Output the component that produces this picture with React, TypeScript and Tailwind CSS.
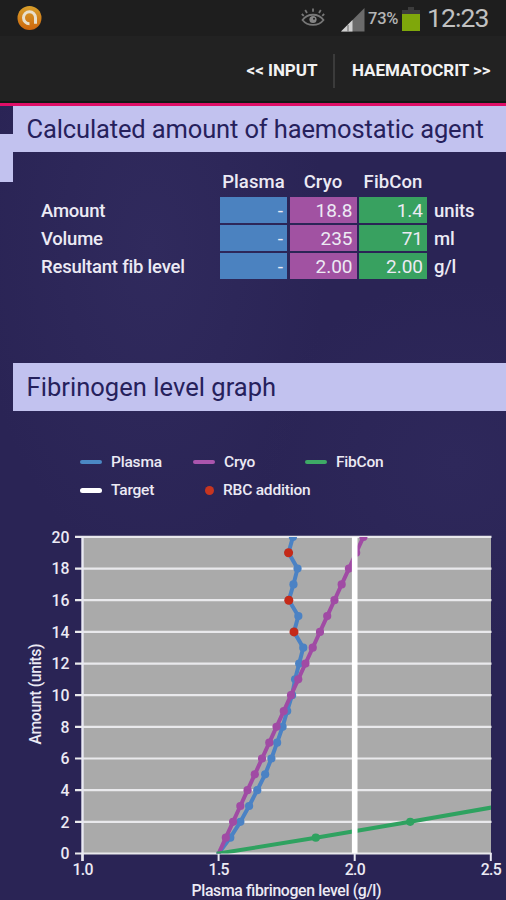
import clsx from 'clsx';

type Column = { label: string; color: string; values: string[] };

const ROWS = [
  { label: 'Amount', unit: 'units' },
  { label: 'Volume', unit: 'ml' },
  { label: 'Resultant fib level', unit: 'g/l' },
];

const COLUMNS: Column[] = [
  { label: 'Plasma', color: 'bg-[#4b82c0]', values: ['-', '-', '-'] },
  { label: 'Cryo', color: 'bg-[#a152a2]', values: ['18.8', '235', '2.00'] },
  { label: 'FibCon', color: 'bg-[#38a160]', values: ['1.4', '71', '2.00'] },
];

// Fibrinogen level for each whole unit, starting at 0
const PLASMA = [
  1.5, 1.543, 1.58, 1.612, 1.642, 1.671, 1.694, 1.715, 1.735, 1.752, 1.77, 1.781, 1.796, 1.811, 1.777, 1.793,
  1.758, 1.775, 1.79, 1.757, 1.773,
];
const CRYO = Array.from({ length: 21 }, (_, i) => 1.5 + i * 0.0266);
const FIBCON = [1.5, 1.857, 2.204, 2.535];
const RBC = [14, 16, 19];

const px = (level: number) => 82.5 + (level - 1) * 272.2;
const py = (amount: number) => 333.5 - amount * 15.83;

function SectionTitle({ children, className }: { children: string; className?: string }) {
  return (
    <h2 className={clsx('ml-[12.5px] bg-[#c2c2ef] pl-[14px] text-[25.5px] text-[#26215c] whitespace-nowrap', className)}>
      {children}
    </h2>
  );
}

function StatusBar() {
  return (
    <div className="flex h-9 items-center bg-[#1e1e1e] pl-[17px] pr-[17px]">
      <svg width="25" height="26" viewBox="0 0 25 26">
        <defs>
          <linearGradient id="orb" x1="0" y1="0" x2="0" y2="1">
            <stop offset="0" stopColor="#d9a02b" />
            <stop offset="1" stopColor="#cd650c" />
          </linearGradient>
        </defs>
        <circle cx="12.5" cy="13" r="12" fill="url(#orb)" />
        <path d="M12.500 18.800A6 6 0 1 1 18.500 12.800V18.800" fill="none" stroke="#e8dfcc" strokeWidth="3" />
      </svg>
      <svg className="ml-auto" width="24" height="20" viewBox="0 0 24 20" fill="none" stroke="#777" strokeWidth="1.8">
        <path d="M1.5 12c5-7 16-7 21 0c-5 6.500-16 6.500-21 0Z" />
        <path d="M6 5 4.200 2M12 3.800V.5M18 5l1.800-3M2.800 7.800.8 6M21.200 7.800 23.200 6" />
        <circle cx="12" cy="11.500" r="3.600" fill="#858585" stroke="none" />
        <circle cx="13" cy="10.800" r="1" fill="#222" stroke="none" />
      </svg>
      <svg className="ml-4 mt-[3px]" width="24" height="24" viewBox="0 0 24 24">
        <path d="M0 23.500 23.500 0V23.500Z" fill="#6b6b6b" />
        <path d="M0 23.500 11.500 12V23.500Z" fill="#d0d0d0" />
        <path d="M7 17V23.500" stroke="#666" strokeWidth="1" />
      </svg>
      <span className="ml-[3px] mt-[2px] w-[31px] whitespace-nowrap text-[16.5px] tracking-[-0.2px] font-medium text-[#b5b5b5]">73%</span>
      <svg className="ml-[3px] mt-[1px]" width="18" height="24" viewBox="0 0 18 24">
        <path d="M0 3H6V0H12V3H18V7H0Z" fill="#3c3c3c" />
        <path d="M0 7H18V24H0Z" fill="#7fa70b" />
      </svg>
      <span className="ml-[7px] w-[62px] whitespace-nowrap text-[26.5px] tracking-[-0.9px] text-[#c1c1c1]">12:23</span>
    </div>
  );
}

function ActionBar() {
  return (
    <div className="flex h-[67px] items-center justify-end border-b-[2px] border-[#111a14] bg-[#222] pr-[15px] pt-[4px] text-[17px] font-bold text-[#f3f3f3]">
      <button className="w-[72px] tracking-[-0.05px] whitespace-nowrap">&lt;&lt; INPUT</button>
      <div className="ml-[15px] h-[34px] w-[2px] bg-[#3b3b3b]" />
      <button className="ml-[17px] w-[139px] text-left tracking-[-0.05px] whitespace-nowrap">HAEMATOCRIT &gt;&gt;</button>
    </div>
  );
}

function ResultTable() {
  return (
    <div className="mt-[16px] ml-[41px] grid grid-cols-[176.500px_67px_67px_68px_60px] grid-rows-[27px_26px_26px_26px] gap-x-[2.500px] gap-y-[2px] text-[18.5px] font-medium text-[#eceaf4]">
      <span />
      {COLUMNS.map((col) => (
        <span key={col.label} className="text-center leading-[29px] tracking-[0.1px] whitespace-nowrap">{col.label}</span>
      ))}
      <span />
      {ROWS.map((row, i) => (
        <div key={row.label} className="contents">
          <span className="leading-[28px] tracking-[-0.21px] whitespace-nowrap">{row.label}</span>
          {COLUMNS.map((col) => (
            <span key={col.label} className={clsx('pr-[4px] text-right text-[19px] leading-[27px] font-normal', col.color)}>{col.values[i]}</span>
          ))}
          <span className="pl-[4.500px] leading-[28px] tracking-[-0.1px]">{row.unit}</span>
        </div>
      ))}
    </div>
  );
}

function Legend() {
  return (
    <div className="mt-[39px] ml-[80px] grid grid-cols-[113px_112px_120px] gap-y-[4px] text-[15.500px] leading-6 font-medium tracking-[-0.2px] whitespace-nowrap text-[#eceaf4]">
      <div className="flex items-center gap-[9px]">
        <i className="h-1 w-[22px] shrink-0 rounded-full bg-[#4b88c4]" />Plasma
      </div>
      <div className="flex items-center gap-[9px]">
        <i className="h-1 w-[22px] shrink-0 rounded-full bg-[#aa55ad]" />Cryo
      </div>
      <div className="flex items-center gap-[9px]">
        <i className="h-1 w-[22px] shrink-0 rounded-full bg-[#3eaa66]" />FibCon
      </div>
      <div className="flex items-center gap-[9px]">
        <i className="h-[5px] w-[22px] shrink-0 rounded-full bg-white" />Target
      </div>
      <div className="flex items-center gap-[9px] pl-[12px]">
        <i className="h-[9px] w-[9px] shrink-0 rounded-full bg-[#c73520]" />RBC addition
      </div>
    </div>
  );
}

function Series({ data, color }: { data: number[]; color: string }) {
  return (
    <g fill={color}>
      <polyline
        points={data.map((level, i) => `${px(level)},${py(i)}`).join(' ')}
        fill="none"
        stroke={color}
        strokeWidth="4"
        strokeLinejoin="round"
        strokeLinecap="square"
      />
      {data.slice(1).map((level, i) => (
        <circle key={i} cx={px(level)} cy={py(i + 1)} r="4.100" />
      ))}
    </g>
  );
}

function Chart() {
  const amounts = Array.from({ length: 11 }, (_, i) => i * 2);
  return (
    <svg className="block" width="506" height="380" viewBox="0 0 506 380" fontSize="15.800" fontWeight="500" fill="#eceaf4">
      <defs>
        <clipPath id="plot">
          <rect x="75" y="17" width="416" height="316.500" />
        </clipPath>
      </defs>
      <rect x="82" y="17" width="409" height="316" fill="#aaa" />
      {amounts.map((n) => (
        <g key={n}>
          <path d={`M75 ${py(n)}H491.500`} stroke="#e9e9ec" strokeWidth="2.200" />
          <text x="69.500" y={py(n) + 5.700} textAnchor="end">{n}</text>
        </g>
      ))}
      <path d="M82.500 16V341" stroke="#e9e9f2" strokeWidth="2.400" />
      {[1, 1.5, 2, 2.5].map((n) => (
        <g key={n}>
          <path d={`M${px(n)} 333V341`} stroke="#e9e9f2" strokeWidth="2" />
          <text x={px(n) + 0.5} y="355" textAnchor="middle" textLength="21">{n.toFixed(1)}</text>
        </g>
      ))}
      <g clipPath="url(#plot)">
        <Series data={PLASMA} color="#4b82c4" />
        <Series data={CRYO} color="#a04ba4" />
        <Series data={FIBCON} color="#2fa260" />
        {RBC.map((n) => (
          <circle key={n} cx={px(PLASMA[n])} cy={py(n)} r="4.500" fill="#c52a18" />
        ))}
        <path d={`M${px(2)} 17V333.500`} stroke="#fff" strokeWidth="5.600" />
      </g>
      <text x="286.500" y="375.500" textAnchor="middle" textLength="190">Plasma fibrinogen level (g/l)</text>
      <text transform="translate(40.500 174) rotate(-90)" textAnchor="middle" textLength="101">Amount (units)</text>
    </svg>
  );
}

export default function App() {
  return (
    <div className="flex h-[900px] w-[506px] flex-col overflow-hidden bg-[#2a2455] font-['Roboto',sans-serif]">
      <StatusBar />
      <ActionBar />
      <div className="h-[3px] shrink-0 bg-[#df0f68]" />
      <main className="relative h-[794px] bg-[radial-gradient(ellipse_at_30%_18%,#302a5d_0%,transparent_35%),radial-gradient(ellipse_at_90%_45%,#2e285b_0%,transparent_30%)]">
        <div className="absolute top-[28px] left-0 h-[48px] w-[13px] bg-[#c2c2ef]" />
        <SectionTitle className="h-[46px] leading-[46px] tracking-[-0.13px]">Calculated amount of haemostatic agent</SectionTitle>
        <ResultTable />
        <SectionTitle className="mt-[84px] h-[48px] leading-[49px] tracking-[0.04px]">Fibrinogen level graph</SectionTitle>
        <Legend />
        <div className="mt-[18px]">
          <Chart />
        </div>
      </main>
    </div>
  );
}
